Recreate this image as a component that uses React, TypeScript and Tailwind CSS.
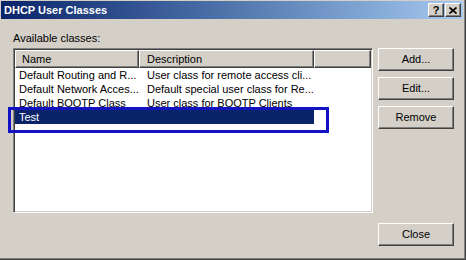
const rows = [
  { name: "Default Routing and R...", desc: "User class for remote access cli..." },
  { name: "Default Network Acces...", desc: "Default special user class for Re..." },
  { name: "Default BOOTP Class", desc: "User class for BOOTP Clients" },
];

function Raised({ children, className = "" }: { children?: React.ReactNode; className?: string }) {
  return (
    <div
      className={
        "bg-[#d4d0c8] border border-t-white border-l-white border-r-[#404040] border-b-[#404040] shadow-[inset_-1px_-1px_0_#808080] " +
        className
      }
    >
      {children}
    </div>
  );
}

export default function App() {
  return (
    <div className="relative w-[466px] h-[260px] overflow-hidden bg-[#d4d0c8] flex flex-col pt-[1px] pl-[1px] pr-[3px] pb-[3px] font-['Liberation_Sans',Arial,sans-serif] text-[11px] text-black shadow-[inset_-1px_-1px_0_#404040,inset_-2px_-2px_0_#808080]">
      {/* title bar */}
      <div className="h-[18px] flex items-center justify-between pl-[3px] pr-[2px] bg-linear-to-r from-[#0a246a] to-[#a6caf0]">
        <span className="text-white font-bold leading-[13px]">DHCP User Classes</span>
        <div className="flex gap-[1px]">
          <Raised className="w-[16px] h-[14px] flex items-center justify-center font-bold leading-none">?</Raised>
          <Raised className="w-[16px] h-[14px] flex items-center justify-center">
            <svg width="8" height="7" viewBox="0 0 8 7">
              <path d="M0.5 0.5L7.5 6.5M7.5 0.5L0.5 6.5" stroke="black" strokeWidth="1.7" />
            </svg>
          </Raised>
        </div>
      </div>

      <div className="flex-1 flex flex-col pl-[12px]">
        <div className="mt-[13px] leading-[13px]">Available classes:</div>

        <div className="mt-[3px] flex gap-[5px]">
          {/* list view */}
          <div className="w-[360px] h-[165px] p-[1px] bg-white border border-t-[#808080] border-l-[#808080] border-r-white border-b-white shadow-[inset_1px_1px_0_#404040,inset_-1px_-1px_0_#d4d0c8]">
            <div className="flex h-[18px]">
              <Raised className="w-[124px] pl-[6px] flex items-center">Name</Raised>
              <Raised className="w-[175px] pl-[7px] flex items-center">Description</Raised>
              <Raised className="flex-1" />
            </div>
            {rows.map((r) => (
              <div key={r.name} className="flex h-[14px] leading-[14px] whitespace-nowrap">
                <div className="w-[124px] pl-[4px]">{r.name}</div>
                <div className="w-[175px] pl-[8px]">{r.desc}</div>
              </div>
            ))}
            <div className="flex h-[14px] leading-[14px] w-[299px] bg-[#0a246a] text-white">
              <div className="pl-[4px]">Test</div>
            </div>
          </div>

          {/* buttons */}
          <div className="flex flex-col gap-[6px]">
            <Raised className="w-[76px] h-[23px] flex items-center justify-center">Add...</Raised>
            <Raised className="w-[76px] h-[23px] flex items-center justify-center">Edit...</Raised>
            <Raised className="w-[76px] h-[23px] flex items-center justify-center">Remove</Raised>
          </div>
        </div>

        <div className="mt-[10px] flex pl-[365px]">
          <Raised className="w-[76px] h-[23px] flex items-center justify-center">Close</Raised>
        </div>
      </div>

      {/* highlight annotation around the selected row */}
      <div className="absolute left-[8px] top-[107px] w-[321px] h-[26px] border-[3px] border-[#1212c4]" />
    </div>
  );
}
